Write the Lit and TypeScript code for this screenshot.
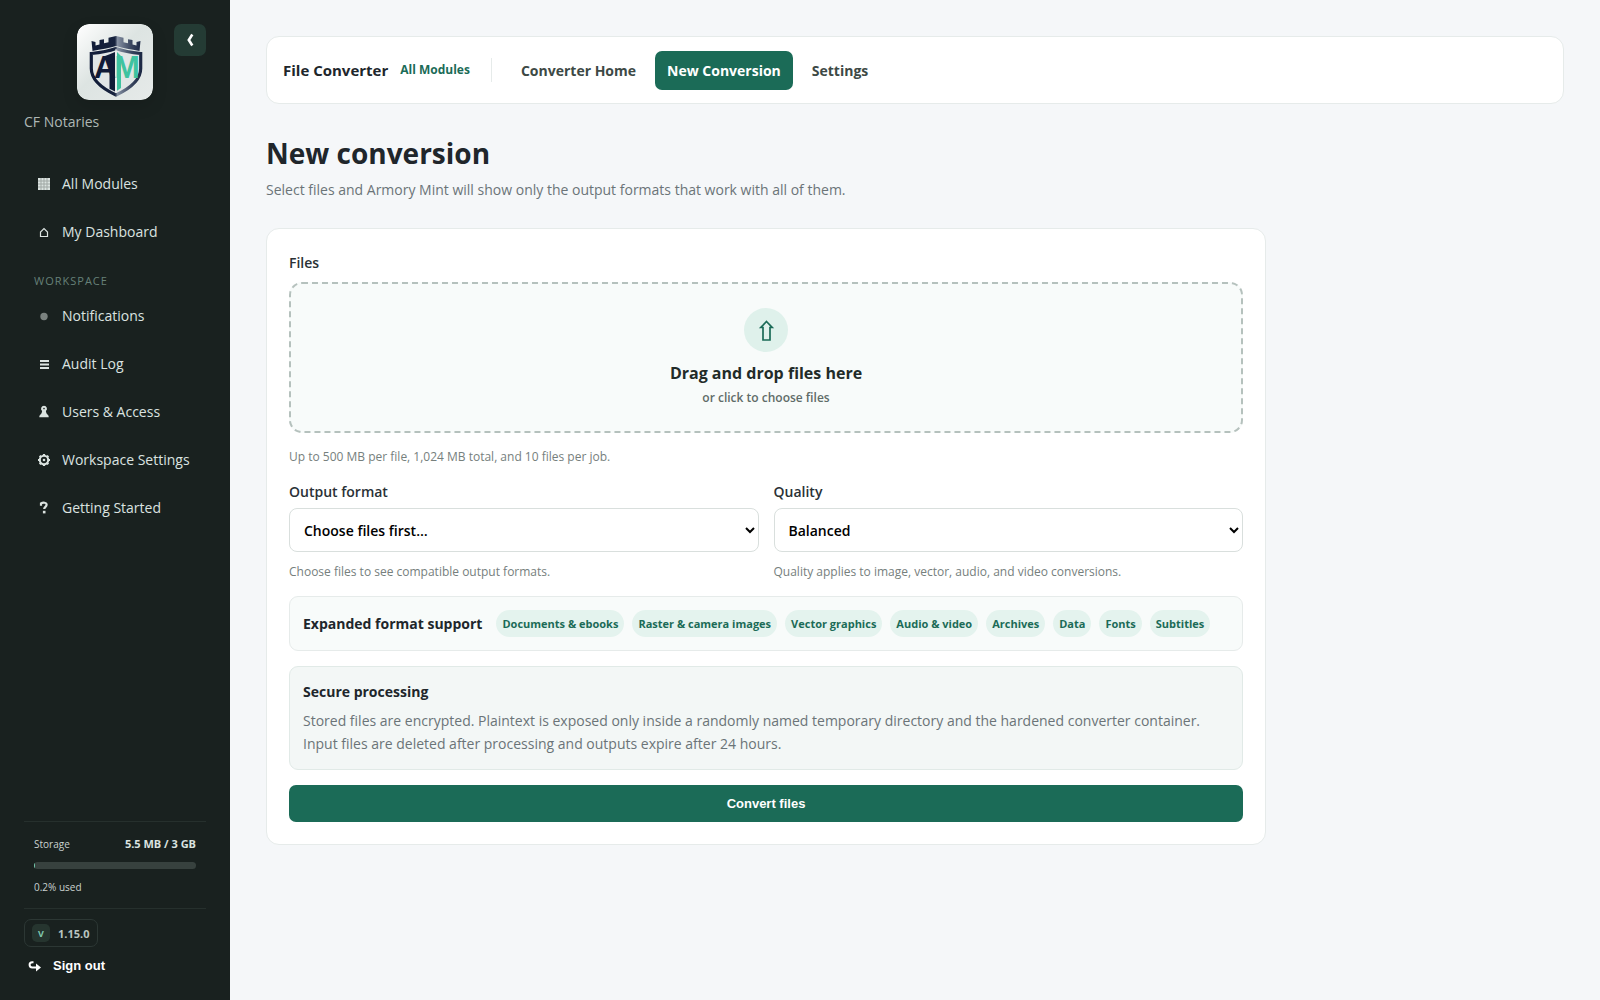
import { LitElement, html, css, svg } from "lit";
import { customElement, property } from "lit/decorators.js";
import { classMap } from "lit/directives/class-map.js";

const icons: Record<string, unknown> = {
  grid: svg`<rect x="2" y="2" width="12" height="12" fill="currentColor"/><path d="M5 2v12M8 2v12M11 2v12M2 5h12M2 8h12M2 11h12" stroke="#19211f" stroke-width="1" opacity=".3"/>`,
  home: svg`<path d="M4.500 12.500V8L8 4.500 11.500 8v4.500z" fill="none" stroke="currentColor" stroke-width="1.200"/>`,
  dot: svg`<circle cx="8" cy="8.500" r="3.700" fill="currentColor" opacity=".5"/>`,
  list: svg`<path d="M4 5h9M4 8.500h9M4 12h9" stroke="currentColor" stroke-width="2.200"/>`,
  pawn: svg`<path d="M8 1.800a3 3 0 0 1 1.900 5.300c.2 2 .9 3.100 2.300 4.200.4.500.5 1.100.5 1.900H3.300c0-.8.1-1.400.5-1.900 1.400-1.100 2.100-2.200 2.300-4.200A3 3 0 0 1 8 1.800z" fill="currentColor"/><circle cx="8" cy="4.600" r=".8" fill="#19211f"/>`,
  gear: svg`<circle cx="8" cy="8" r="4.200" fill="none" stroke="currentColor" stroke-width="2.100"/><circle cx="8" cy="8" r="1.300" fill="currentColor"/><path d="M8 2v2M8 12v2M2 8h2M12 8h2M3.700 3.700l1.500 1.500M10.800 10.800l1.500 1.500M12.300 3.700l-1.500 1.500M5.200 10.800l-1.500 1.500" stroke="currentColor" stroke-width="2.200"/>`,
  help: svg`<path d="M5 5.800V3.400C7 2.200 10.600 2.300 10.600 4.800c0 2-2.400 2.200-2.400 4.300" fill="none" stroke="currentColor" stroke-width="2.200"/><rect x="6.900" y="10.800" width="2.600" height="2.600" fill="currentColor"/>`,
  chevron: svg`<path d="M10.300 2.500L6.800 8l3.500 5.500" fill="none" stroke="currentColor" stroke-width="2.600"/>`,
  exit: svg`<path d="M6.500 4.200H5.200a2.600 2.600 0 0 0 0 5.200H10" fill="none" stroke="currentColor" stroke-width="2"/><path d="M9 5.500l5 4-5 4z" fill="currentColor"/>`,
};

const icon = (name: string, size = 16) =>
  html`<svg width=${size} height=${size} viewBox="0 0 16 16" aria-hidden="true">${icons[name]}</svg>`;

@customElement("armory-logo")
class ArmoryLogo extends LitElement {
  static styles = css`
    :host { display: block; }
    .mark { display: block; border-radius: 12px; box-shadow: 0 6px 16px rgba(0, 0, 0, 0.12); }
    .letter { font-family: "Liberation Sans", Arial, sans-serif; font-weight: 700; font-size: 31px; }
  `;
  render() {
    return html`
      <svg class="mark" width="76" height="76" viewBox="0 0 76 76" role="img" aria-label="Armory Mint">
        <defs>
          <linearGradient id="card" x1="0" y1="0" x2="1" y2="1">
            <stop offset="0" stop-color="#ffffff"/><stop offset=".45" stop-color="#dde4e2"/><stop offset="1" stop-color="#e6eae9"/>
          </linearGradient>
          <linearGradient id="tower" x1="0" y1="0" x2="1" y2="0">
            <stop offset="0" stop-color="#111c38"/><stop offset=".48" stop-color="#17233e"/>
            <stop offset=".53" stop-color="#8590a2"/><stop offset=".8" stop-color="#3c4861"/><stop offset="1" stop-color="#1d2945"/>
          </linearGradient>
        </defs>
        <rect width="76" height="76" rx="12" fill="url(#card)"/>
        <path fill="url(#tower)" d="M14.500 17l4 1v3.500l4-1V16l4.500-.7v4l4.500-1v-4.500L39 12l7.500 1.800v4.500l4.500 1v-4l4.500.7v4.500l4 1V18l4-1-1 10C54 25.500 46 24 39 22c-7 2-15 3.500-23.500 5z"/>
        <path fill="#e1e6e6" stroke="url(#tower)" stroke-width="3.200" d="M14.300 29.500C24 28.500 32 27 39 24.500c7 2.500 15 4 24.700 5v15C63.700 56 54 64 39 71 24 64 14.300 56 14.300 44.500z"/>
        <path fill="#101b37" d="M28 32l4-1.500 6-2.500v39.500l-5.500-2.700V40z"/>
        <path fill="#3fc3a0" d="M40 28l4 4v32l-4 2.700z"/>
        <text class="letter" x="17" y="54" fill="#101b37">A</text>
        <text class="letter" x="37" y="54" fill="#3fc3a0">M</text>
        <path d="M39 25v44" stroke="#f2f5f4" stroke-width="1"/>
      </svg>
    `;
  }
}

@customElement("side-nav")
class SideNav extends LitElement {
  @property({ type: Number }) used = 0.2;

  static styles = css`
    * { box-sizing: border-box; }
    :host {
      display: flex; flex-direction: column; box-sizing: border-box; min-height: 100vh;
      padding: 24px 24px 15px; background: #19211f; color: #dbe3e0;
    }
    .head { display: flex; justify-content: flex-end; align-items: flex-start; gap: 21px; }
    .collapse {
      display: grid; place-items: center; width: 32px; height: 32px; padding: 0;
      border: 0; border-radius: 7px; background: #243b34; color: #fff;
    }
    .org { margin: 12px 0 32px; font-size: 14px; line-height: 20px; color: #aeb8b5; }
    .links { display: flex; flex-direction: column; gap: 8px; }
    .link {
      display: flex; align-items: center; gap: 10px; height: 40px; padding: 0 12px;
      color: #dbe3e0; font-size: 14px; line-height: 20px; text-decoration: none; white-space: nowrap;
    }
    .group { margin: 22px 0 8px; padding-left: 10px; font-size: 11px; line-height: 14px; letter-spacing: 1px; color: #668078; font-weight: 400; }
    .foot { margin-top: auto; }
    .storage {
      display: flex; flex-direction: column; gap: 10px; padding: 14px 10px 13px;
      border: solid #26302d; border-width: 1px 0; font-size: 10px; line-height: 16px; color: #c9d2cf;
    }
    .row { display: flex; justify-content: space-between; }
    .total { font-size: 11px; font-weight: 700; color: #dbe3e0; }
    .track { height: 7px; border-radius: 4px; background: #37413e; overflow: hidden; }
    .fill { height: 100%; background: #72c8ab; min-width: 1px; }
    .version {
      display: flex; width: fit-content; align-items: center; gap: 8px; height: 28px; margin-top: 10px; padding: 0 8px 0 7px;
      border: 1px solid #2c3734; border-radius: 7px; font-size: 11px; font-weight: 700; color: #bac5c1;
    }
    .v { display: grid; place-items: center; width: 18px; height: 18px; border-radius: 5px; background: #26352f; color: #80c9af; font-size: 9px; }
    .signout {
      display: flex; align-items: center; gap: 10px; height: 38px; padding: 0 3px; border: 0;
      background: none; color: #fff; font: 700 13px/20px "Liberation Sans", Arial, sans-serif;
    }
  `;

  private link(name: string, text: string) {
    return html`<a class="link" href="#">${icon(name)}<span>${text}</span></a>`;
  }

  render() {
    return html`
      <div class="head">
        <armory-logo></armory-logo>
        <button class="collapse" aria-label="Collapse sidebar">${icon("chevron")}</button>
      </div>
      <p class="org">CF Notaries</p>
      <nav class="links">${this.link("grid", "All Modules")}${this.link("home", "My Dashboard")}</nav>
      <h2 class="group">WORKSPACE</h2>
      <nav class="links">
        ${this.link("dot", "Notifications")}${this.link("list", "Audit Log")}
        ${this.link("pawn", "Users & Access")}${this.link("gear", "Workspace Settings")}
        ${this.link("help", "Getting Started")}
      </nav>
      <div class="foot">
        <div class="storage">
          <div class="row"><span>Storage</span><span class="total">5.5 MB / 3 GB</span></div>
          <div class="track" role="progressbar" aria-label="Storage" aria-valuenow=${this.used}>
            <div class="fill" style="width:${this.used}%"></div>
          </div>
          <span>${this.used}% used</span>
        </div>
        <div class="version"><span class="v">V</span>1.15.0</div>
        <button class="signout">${icon("exit")}Sign out</button>
      </div>
    `;
  }
}

@customElement("module-bar")
class ModuleBar extends LitElement {
  static styles = css`
    :host {
      display: flex; align-items: center; box-sizing: border-box; min-height: 68px; padding: 0 16px;
      background: #fff; border: 1px solid #e6ebea; border-radius: 13px; font-weight: 700; white-space: nowrap;
    }
    .title { font-size: 15px; line-height: 24px; color: #20262b; }
    .all { margin-left: 12px; padding-right: 21px; border-right: 1px solid #e6ebea; font-size: 12px; line-height: 24px; color: #1b6b57; text-decoration: none; }
    .tabs { display: flex; gap: 7px; margin-left: 17px; }
    .tab { padding: 0 12px; border-radius: 7px; font-size: 14px; line-height: 39px; color: #3d4945; text-decoration: none; }
    .active { background: #1b6b57; color: #fff; }
  `;
  render() {
    return html`
      <span class="title">File Converter</span>
      <a class="all" href="#">All Modules</a>
      <nav class="tabs">
        ${["Converter Home", "New Conversion", "Settings"].map(
          (t) => html`<a href="#" class=${classMap({ tab: true, active: t === "New Conversion" })}>${t}</a>`
        )}
      </nav>
    `;
  }
}

@customElement("conversion-form")
class ConversionForm extends LitElement {
  static styles = css`
    * { box-sizing: border-box; }
    :host {
      display: block; box-sizing: border-box; max-width: 1000px; padding: 22px;
      background: #fff; border: 1px solid #e6ebea; border-radius: 13px;
    }
    .label { display: block; font-size: 14px; line-height: 24px; font-weight: 600; color: #2a3136; }
    .drop {
      position: relative; display: flex; flex-direction: column; align-items: center;
      margin-top: 7px; padding: 24px 0 21px; border: 2px dashed #b5c1bd; border-radius: 13px; background: #f8fbfa;
    }
    .file { position: absolute; inset: 0; width: 100%; height: 100%; opacity: 0; }
    .up { display: grid; place-items: center; width: 44px; height: 44px; border-radius: 50%; background: #dff1eb; color: #1b6b57; }
    .lead { margin-top: 8px; font-size: 16px; line-height: 26px; font-weight: 700; color: #222b28; }
    .sub { font-size: 12px; line-height: 24px; font-weight: 600; color: #5f6c68; }
    .hint { margin: 0; font-size: 12px; line-height: 18px; color: #76807d; }
    .limits { margin: 15px 0 14px; }
    .fields { display: grid; grid-template-columns: 1fr 1fr; gap: 15px; }
    .select {
      display: block; width: 100%; height: 44px; margin: 4px 0 11px; padding: 0 10px;
      border: 1px solid #d9dfdd; border-radius: 8px; background: #fff; color: #000;
      font: 600 14px/20px "Open Sans", "Noto Sans", sans-serif;
    }
    .support {
      display: flex; flex-wrap: wrap; align-items: center; gap: 8px; margin-top: 15px; padding: 13px;
      border: 1px solid #e6ebea; border-radius: 9px; background: #f8fbfa;
    }
    .name { margin-right: 6px; font-size: 14px; line-height: 24px; font-weight: 700; color: #20262b; }
    .chip { padding: 0 6px; border-radius: 14px; background: #e4f3ee; color: #1b6b57; font-size: 11px; line-height: 27px; font-weight: 700; }
    .secure { margin: 15px 0; padding: 13px 13px 14px; border: 1px solid #e1eae7; border-radius: 9px; background: #f3f7f6; }
    .heading { margin: 0 0 5px; font-size: 14px; line-height: 24px; font-weight: 700; color: #20262b; }
    .text { margin: 0; font-size: 14px; line-height: 23px; color: #6b7478; }
    .submit {
      display: block; width: 100%; height: 37px; border: 0; border-radius: 7px; background: #1b6b57;
      color: #fff; font: 700 13px/20px "Liberation Sans", Arial, sans-serif;
    }
  `;

  private formats = ["Documents & ebooks", "Raster & camera images", "Vector graphics", "Audio & video", "Archives", "Data", "Fonts", "Subtitles"];

  render() {
    return html`
      <form>
        <label class="label" for="files">Files</label>
        <div class="drop">
          <span class="up">
            <svg width="24" height="24" viewBox="0 0 24 24" aria-hidden="true">
              <path d="M12.500 3.500L18.200 9.500H16V22H9V9.500H6.800z" fill="none" stroke="currentColor" stroke-width="1.700"/>
            </svg>
          </span>
          <span class="lead">Drag and drop files here</span>
          <span class="sub">or click to choose files</span>
          <input class="file" id="files" type="file" multiple />
        </div>
        <p class="hint limits">Up to 500 MB per file, 1,024 MB total, and 10 files per job.</p>
        <div class="fields">
          <div>
            <label class="label" for="format">Output format</label>
            <select class="select" id="format"><option>Choose files first…</option></select>
            <p class="hint">Choose files to see compatible output formats.</p>
          </div>
          <div>
            <label class="label" for="quality">Quality</label>
            <select class="select" id="quality"><option>Balanced</option></select>
            <p class="hint">Quality applies to image, vector, audio, and video conversions.</p>
          </div>
        </div>
        <div class="support">
          <span class="name">Expanded format support</span>
          ${this.formats.map((f) => html`<span class="chip">${f}</span>`)}
        </div>
        <section class="secure">
          <h2 class="heading">Secure processing</h2>
          <p class="text">Stored files are encrypted. Plaintext is exposed only inside a randomly named temporary directory and the hardened converter container. Input files are deleted after processing and outputs expire after 24 hours.</p>
        </section>
        <button class="submit" type="button">Convert files</button>
      </form>
    `;
  }
}

@customElement("app-root")
class AppRoot extends LitElement {
  static styles = css`
    :host {
      display: grid; grid-template-columns: 230px minmax(0, 1fr); min-height: 100vh;
      background: #f5f7f9; font-family: "Open Sans", "Noto Sans", sans-serif;
    }
    .main { padding: 36px; }
    .title { margin: 29px 0 0; font-size: 28px; line-height: 40px; font-weight: 700; color: #20262b; }
    .intro { margin: 5px 0 26px; font-size: 14px; line-height: 24px; color: #6b7478; }
  `;
  render() {
    return html`
      <side-nav></side-nav>
      <main class="main">
        <module-bar></module-bar>
        <h1 class="title">New conversion</h1>
        <p class="intro">Select files and Armory Mint will show only the output formats that work with all of them.</p>
        <conversion-form></conversion-form>
      </main>
    `;
  }
}
